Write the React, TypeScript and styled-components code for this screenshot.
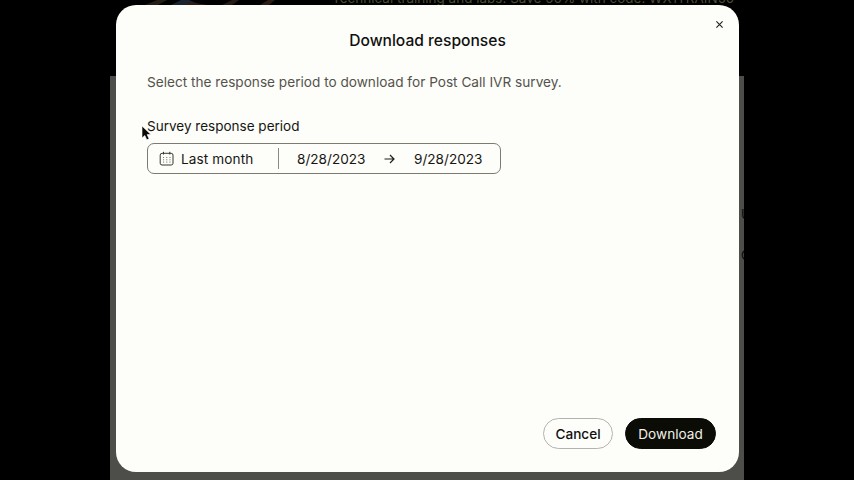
import React from "react";
import styled, { createGlobalStyle } from "styled-components";

const GlobalStyle = createGlobalStyle`
  * { box-sizing: border-box; }
  html, body { margin: 0; background: #000; overflow: hidden; }
  body { font-family: Inter, "Liberation Sans", sans-serif; color: #101010; }
`;

const Screen = styled.div`
  position: relative;
  width: 854px;
  height: 480px;
  overflow: hidden;
  background: #000;
`;

const Page = styled.div`
  width: 634px;
  height: 480px;
  margin: 0 auto;
  display: flex;
  flex-direction: column;
`;

const Banner = styled.div`
  height: 76px;
  flex: none;
  display: flex;
  align-items: flex-start;
  overflow: hidden;
`;

const BannerArt = styled.svg`
  width: 222px;
  height: 8px;
  flex: none;
`;

const BannerText = styled.div`
  margin-top: -10px;
  font-size: 13.5px;
  line-height: 17px;
  white-space: nowrap;
  color: #4b4a35;
`;

const PageBody = styled.div`
  flex: 1;
  background: #4d4d4a;
  display: flex;
  flex-direction: column;
  align-items: flex-end;
  padding-top: 130px;
  gap: 24px;
  overflow: hidden;
`;

const PageLetter = styled.div`
  width: 3px;
  overflow: hidden;
  font-size: 13px;
  line-height: 17px;
  color: #080808;
`;

const Overlay = styled.div`
  position: absolute;
  inset: 0;
  padding: 5px 115px 8px 116px;
`;

const Dialog = styled.section`
  width: 623px;
  height: 467px;
  border-radius: 20px;
  background: #fdfdfa;
  padding: 0 23px 23px 31px;
  display: flex;
  flex-direction: column;
`;

const Header = styled.header`
  height: 66px;
  flex: none;
  display: grid;
  grid-template-columns: 1fr auto 1fr;
  margin: 0 -23px 0 -31px;
`;

const Title = styled.h1`
  grid-column: 2;
  margin: 26px 0 0;
  font-size: 15.6px;
  line-height: 20px;
  font-weight: 500;
  white-space: nowrap;
`;

const CloseButton = styled.button`
  justify-self: end;
  align-self: start;
  margin: 14px 14px 0 0;
  width: 11px;
  height: 11px;
  border: 0;
  padding: 0;
  background: none;
  display: grid;
  place-items: center;
`;

const Description = styled.p`
  margin: 2px 0 0;
  font-size: 13.63px;
  line-height: 18px;
  white-space: nowrap;
  color: #54534b;
`;

const Label = styled.div`
  margin-top: 26px;
  font-size: 13.52px;
  line-height: 18px;
  color: #161612;
`;

const PeriodField = styled.div`
  margin-top: 8px;
  width: 354px;
  height: 31px;
  border: 1px solid #7b7b70;
  border-radius: 7px;
  display: flex;
  align-items: center;
  font-size: 13.6px;
  line-height: 18px;
  color: #161612;
`;

const Preset = styled.div`
  width: 131px;
  height: 21px;
  border-right: 1px solid #8a8a84;
  padding-left: 11px;
  display: flex;
  align-items: center;
  gap: 7px;
  letter-spacing: 0.1px;
`;

const DateRange = styled.div`
  padding-left: 18px;
  display: flex;
  align-items: center;
  gap: 18px;
`;

const DateValue = styled.span`
  width: 69px;
  white-space: nowrap;
`;

const Footer = styled.footer`
  margin-top: auto;
  display: flex;
  justify-content: flex-end;
  gap: 12px;
`;

const PillButton = styled.button<{ $primary?: boolean }>`
  width: ${(p) => (p.$primary ? 91 : 70)}px;
  height: 31px;
  padding: 1px 0 0;
  border-radius: 16px;
  border: 1px solid ${(p) => (p.$primary ? "#0c0c06" : "#b3b3ae")};
  background: ${(p) => (p.$primary ? "#0c0c06" : "transparent")};
  color: ${(p) => (p.$primary ? "#f1f1e6" : "#101010")};
  font: 500 13.6px/18px Inter, "Liberation Sans", sans-serif;
  font-weight: ${(p) => (p.$primary ? 400 : 500)};
`;

const Pointer = styled.svg`
  position: absolute;
  left: 141px;
  top: 125px;
`;

const CalendarIcon = () => (
  <svg width="15" height="15" viewBox="0 0 15 15" fill="none" stroke="#37372b">
    <rect x="1.2" y="2.3" width="12.8" height="11.7" rx="1.8" />
    <path d="M4.5 .8v2.7M10.8 .8v2.7" />
    <path d="M4 6.5h7.5M4 8.8h7.5M4 11.1h7.5" stroke="#77776b" strokeDasharray="1.1 2.1" />
  </svg>
);

export default function App() {
  return (
    <>
      <GlobalStyle />
      <Screen>
        <Page>
          <Banner>
            <BannerArt viewBox="0 0 222 8">
              <path d="M35 5l12-5h10l-9 5zM112 5l10-5h7l-7 5z" fill="#241e16" />
              <path d="M61 5l10-5h8l12 5z" fill="#1b2230" />
              <path d="M75 5l3-3 20 3zM150 5l8-5h7l-6 5z" fill="#2e1d15" />
            </BannerArt>
            <BannerText>Technical training and labs. Save 50% with code: WX1TRAIN50</BannerText>
          </Banner>
          <PageBody>
            <PageLetter>U</PageLetter>
            <PageLetter>C</PageLetter>
          </PageBody>
        </Page>
        <Overlay>
          <Dialog role="dialog" aria-label="Download responses">
            <Header>
              <Title>Download responses</Title>
              <CloseButton aria-label="Close">
                <svg width="7" height="7" viewBox="0 0 7 7" stroke="#202020" strokeWidth="1.1">
                  <path d="M.4 .4l6.2 6.2M6.6 .4L.4 6.6" />
                </svg>
              </CloseButton>
            </Header>
            <Description>Select the response period to download for Post Call IVR survey.</Description>
            <Label>Survey response period</Label>
            <PeriodField>
              <Preset>
                <CalendarIcon />
                Last month
              </Preset>
              <DateRange>
                <DateValue>8/28/2023</DateValue>
                <svg width="12" height="10" viewBox="0 0 12 10" fill="none" stroke="#202018" strokeWidth="1.2">
                  <path d="M.5 5h9.5M6 1L10 5 6 9" />
                </svg>
                <DateValue>9/28/2023</DateValue>
              </DateRange>
            </PeriodField>
            <Footer>
              <PillButton>Cancel</PillButton>
              <PillButton $primary>Download</PillButton>
            </Footer>
          </Dialog>
        </Overlay>
        <Pointer width="11" height="16" viewBox="0 0 11 16">
          <path d="M1 1v12l2.8-2.5 2 4.3 2.3-1-2-4.2h3.8z" fill="#080808" stroke="#fff" strokeWidth="0.6" />
        </Pointer>
      </Screen>
    </>
  );
}
